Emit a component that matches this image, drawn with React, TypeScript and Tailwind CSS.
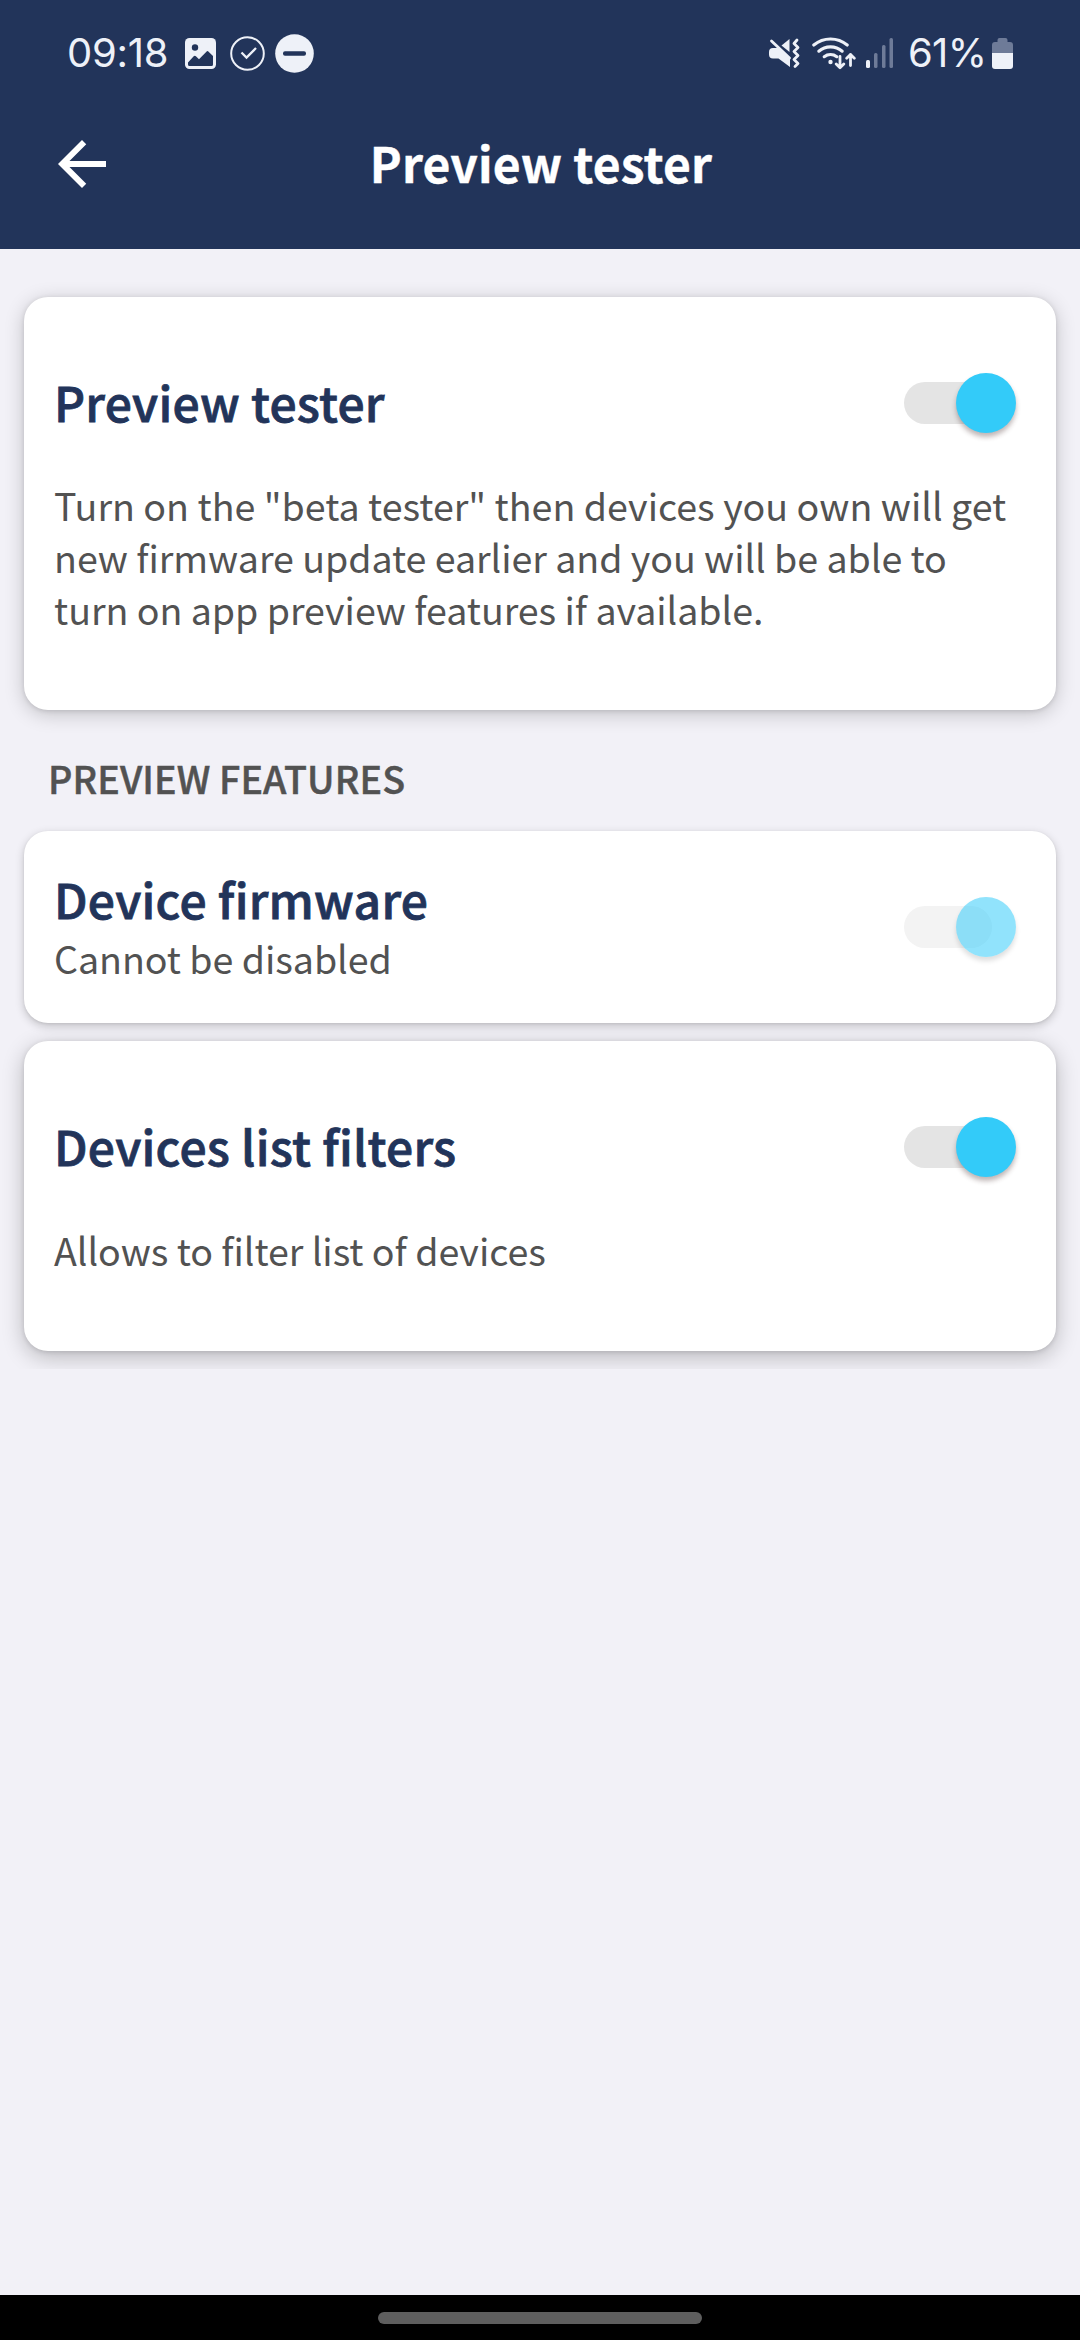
import React from "react";

function StatusBar() {
  return (
    <div className="flex h-[78px] items-start justify-between pl-[67px] pr-[67px] text-[#eef1f8] font-['Inter',sans-serif]">
      <div className="flex items-center pt-[28px]">
        <span className="w-[100px] whitespace-nowrap text-[40px] leading-[50px] tracking-[-0.3px]">09:18</span>
        <svg width="31" height="31" viewBox="0 0 31 31" className="ml-[18px]">
          <rect width="31" height="31" rx="4.5" fill="#eef1f8" />
          <circle cx="10" cy="9.5" r="3.2" fill="#22345a" />
          <path d="M3 24.500L8.700 18.300a1.500 1.500 0 0 1 2.200 0L14 21.300l7.400-7.600a1.500 1.500 0 0 1 2.200 0L28 18v8.500a1.500 1.500 0 0 1-1.500 1.500h-22A1.500 1.500 0 0 1 3 26.500z" fill="#22345a" />
        </svg>
        <svg width="35" height="35" viewBox="0 0 35 35" fill="none" stroke="#eef1f8" strokeWidth="2" className="ml-[14px]">
          <circle cx="17.500" cy="17.500" r="16.300" />
          <path d="M11.500 16.500l5 5L26 12" strokeWidth="2.300" />
        </svg>
        <svg width="39" height="39" viewBox="0 0 39 39" className="ml-[10px]">
          <circle cx="19.500" cy="19.500" r="19.300" fill="#eef1f8" />
          <rect x="8" y="17.300" width="23" height="4.400" rx="2" fill="#22345a" />
        </svg>
      </div>
      <div className="flex items-center pt-[28px]">
        <svg width="31" height="31" viewBox="0 0 31 31" fill="#eef1f8">
          <path d="M0 14a4 4 0 0 1 4-4h5L21 21v8L9.500 20.500H4a4 4 0 0 1-4-4z" />
          <path d="M12.500 7.500L20.500 1v13z" />
          <path d="M2.500 3l18 17" stroke="#eef1f8" strokeWidth="2.800" strokeLinecap="round" />
          <path d="M28 2l-3 3.500 4 4-4 4 4 4-4 4 4 4-3 3" fill="none" stroke="#eef1f8" strokeWidth="2.800" strokeLinecap="round" strokeLinejoin="round" />
        </svg>
        <svg width="44" height="34" viewBox="0 0 44 34" fill="none" stroke="#eef1f8" strokeWidth="3.100" strokeLinecap="round" strokeLinejoin="round" className="ml-[12px]">
          <path d="M1.800 9a26 26 0 0 1 33.400 0" />
          <path d="M6.800 15.200a18 18 0 0 1 23.400 0" />
          <path d="M12.200 20.700a10.500 10.500 0 0 1 12.600 0" />
          <circle cx="18.500" cy="26" r="2.200" fill="#eef1f8" stroke="none" />
          <path d="M28 20.500v11M24.200 28l3.800 3.800 3.800-3.800M38.500 29.500v-11M34.700 22.300l3.800-3.800 3.800 3.800" strokeWidth="2.800" />
        </svg>
        <svg width="28" height="31" viewBox="0 0 28 31" className="ml-[10px]">
          <rect x="0" y="22" width="4" height="8" rx="1.500" fill="#eef1f8" />
          <rect x="8" y="15" width="3.500" height="15" rx="1.500" fill="#6e7b98" />
          <rect x="16" y="7" width="3.500" height="23" rx="1.500" fill="#6e7b98" />
          <rect x="23.500" y="0" width="3.500" height="30" rx="1.500" fill="#6e7b98" />
        </svg>
        <span className="ml-[14px] w-[76px] whitespace-nowrap text-[40px] leading-[50px] tracking-[-0.700px]">61%</span>
        <svg width="21" height="31" viewBox="0 0 21 31" className="ml-[8px]">
          <path d="M0 15.500V7a3 3 0 0 1 3-3h2.500V2a2 2 0 0 1 2-2h6a2 2 0 0 1 2 2v2H18a3 3 0 0 1 3 3v8.500z" fill="#6e7b98" />
          <path d="M0 15h21v13a3 3 0 0 1-3 3H3a3 3 0 0 1-3-3z" fill="#eef1f8" />
        </svg>
      </div>
    </div>
  );
}

function Toggle({ disabled = false }: { disabled?: boolean }) {
  return (
    <button
      type="button"
      role="switch"
      aria-checked="true"
      disabled={disabled}
      className="relative flex h-[60px] w-[112px] shrink-0 items-center"
    >
      <span className={`h-[42px] w-[88px] rounded-full ${disabled ? "bg-[#f3f3f3]" : "bg-[#e4e4e4]"}`} />
      <span
        className={`absolute top-0 right-0 size-[60px] rounded-full ${
          disabled
            ? "bg-[#33cbf9]/54 shadow-[0_4px_5px_rgba(0,0,0,0.13)]"
            : "bg-[#33cbf9] shadow-[0_4px_5px_rgba(60,30,30,0.32)]"
        }`}
      />
    </button>
  );
}

const titleClass =
  "whitespace-nowrap text-[48px] font-medium leading-[60px] tracking-[0.230px] text-[#22345a] [-webkit-text-stroke:0.8px_#22345a]";
const bodyClass = "text-[37.600px] leading-[52px] tracking-[-0.040px] text-[#525252]";

export default function App() {
  return (
    <div className="flex h-[2340px] w-[1080px] flex-col overflow-hidden bg-[#f2f1f7] font-['Noto_Sans_CJK_SC',sans-serif]">
      <header className="h-[249px] shrink-0 bg-[#22345a]">
        <StatusBar />
        <div className="grid h-[171px] grid-cols-[1fr_auto_1fr] items-start pt-[50px]">
          <svg width="72" height="72" viewBox="0 0 24 24" fill="#ffffff" className="ml-[46px]">
            <path d="M20 11H7.830l5.590-5.590L12 4l-8 8 8 8 1.410-1.410L7.830 13H20v-2z" />
          </svg>
          <h1 className="pt-[4px] pl-[2px] text-[48px] font-bold leading-[60px] tracking-[0.150px] text-white [-webkit-text-stroke:0.4px_#ffffff]">Preview tester</h1>
        </div>
      </header>

      <main className="flex-1">
        <div className="h-[1120px] overflow-hidden px-[24px] pt-[48px]">
          <section className="h-[413px] rounded-[24px] bg-white pt-[74px] pr-[40px] pl-[30px] shadow-[0_4px_20px_rgba(0,0,0,0.2),0_1px_5px_rgba(0,0,0,0.12)]">
            <div className="flex items-start justify-between">
              <h2 className={titleClass}>Preview tester</h2>
              <div className="pt-[2px]"><Toggle /></div>
            </div>
            <p className={`mt-[46px] whitespace-nowrap ${bodyClass}`}>
              <span className="tracking-[0.010px]">Turn on the "beta tester" then devices you own will get</span>
              <br />
              new firmware update earlier and you will be able to
              <br />
              turn on app preview features if available.
            </p>
          </section>

          <h3 className="mt-[42px] ml-[24px] text-[37.600px] font-medium leading-[52px] tracking-[0.120px] text-[#525252] [-webkit-text-stroke:0.5px_#525252]">
            PREVIEW FEATURES
          </h3>

          <section className="mt-[27px] flex h-[192px] items-start justify-between rounded-[24px] bg-white pt-[37px] pr-[40px] pl-[30px] shadow-[0_3px_10px_rgba(0,0,0,0.2),0_1px_3px_rgba(0,0,0,0.08)]">
            <div>
              <h2 className={titleClass}>Device firmware</h2>
              <p className={`mt-[4px] ${bodyClass}`}>Cannot be disabled</p>
            </div>
            <div className="pt-[29px]"><Toggle disabled /></div>
          </section>

          <section className="mt-[18px] h-[310px] rounded-[24px] bg-white pt-[74px] pr-[40px] pl-[30px] shadow-[0_6px_22px_rgba(0,0,0,0.24),0_1px_5px_rgba(0,0,0,0.12)]">
            <div className="flex items-start justify-between">
              <h2 className={titleClass}>Devices list filters</h2>
              <div className="pt-[2px]"><Toggle /></div>
            </div>
            <p className={`mt-[47px] ${bodyClass}`}>Allows to filter list of devices</p>
          </section>
        </div>
      </main>

      <footer className="flex h-[45px] shrink-0 justify-center bg-black pt-[17px]">
        <div className="h-[12px] w-[324px] rounded-full bg-[#5e5e5e]" />
      </footer>
    </div>
  );
}
